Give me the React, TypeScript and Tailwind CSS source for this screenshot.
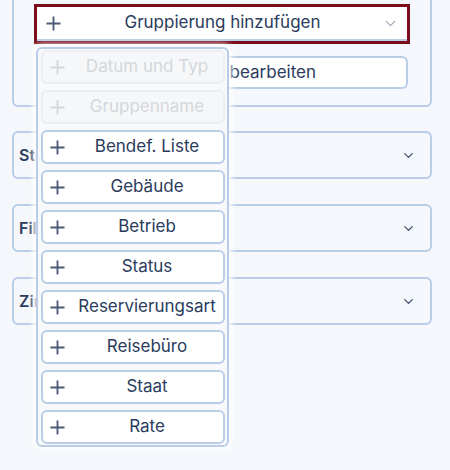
import { ChevronDown } from "lucide-react";

const items = [
  { label: "Datum und Typ", disabled: true },
  { label: "Gruppenname", disabled: true },
  { label: "Bendef. Liste" },
  { label: "Gebäude" },
  { label: "Betrieb" },
  { label: "Status" },
  { label: "Reservierungsart" },
  { label: "Reisebüro" },
  { label: "Staat" },
  { label: "Rate" },
];

const sections = ["Stornierte", "Filter", "Zimmer"];

function PlusMark({ className }: { className: string }) {
  return (
    <svg viewBox="0 0 16 16" className={className} fill="none" stroke="currentColor" strokeWidth={2}>
      <path d="M8 0.5v15M0.5 8h15" />
    </svg>
  );
}

function Section({ label }: { label: string }) {
  return (
    <div className="flex h-[48px] items-center justify-between rounded-md border-2 border-[#b9cde9] pl-[5px] pr-[14px]">
      <span className="text-[16px] font-semibold text-[#2a3b5c]">{label}</span>
      <ChevronDown className="size-[15px] text-[#3d4d6b]" strokeWidth={2} />
    </div>
  );
}

export default function App() {
  return (
    <div
      className="relative h-[470px] w-[450px] overflow-hidden bg-[#f4f7fb]"
      style={{ fontFamily: "Inter, 'Noto Sans', sans-serif" }}
    >
      <div className="mx-3 w-[420px] rounded-b-md border-x-2 border-b-2 border-[#b9cde9] px-[20px] pb-[16px] pt-1">
        <div className="border-[3px] border-[#7b0d1a] bg-white">
          <div className="flex h-[34px] items-center border-b-2 border-[#b9cde9] pl-[9px] pr-[8px]">
            <PlusMark className="size-[15px] text-[#4e5b77]" />
            <span className="flex-1 pl-[2px] text-center text-[17px] text-[#2a3b5c]">
              Gruppierung hinzufügen
            </span>
            <ChevronDown className="size-[17px] text-[#96a2b6]" strokeWidth={1.5} />
          </div>
        </div>
        <div className="mx-[2px] mt-[12px] flex h-[33px] items-center justify-center rounded-md border-2 border-[#b9cde9] bg-white pr-[4px] text-[17px] text-[#2a3b5c]">
          Gruppierung bearbeiten
        </div>
      </div>

      <div className="mx-3 mt-6 flex w-[420px] flex-col gap-[25px]">
        {sections.map((s) => (
          <Section key={s} label={s} />
        ))}
      </div>

      <div className="absolute left-[36px] top-[47px] w-[193px] rounded-md border-2 border-[#b9cde9] bg-[#f8f9fb] pb-[1px] pl-[3px] pr-[2px] pt-[1px] shadow-[0_0_6px_3px_rgba(255,255,255,0.9)]">
        <div className="flex flex-col gap-[6px]">
          {items.map((it) => (
            <div
              key={it.label}
              className={
                it.disabled
                  ? "flex h-[34px] items-center rounded-md border-2 border-[#eceef1] bg-[#f6f7f8] pl-[7px] pr-1"
                  : "flex h-[34px] items-center rounded-md border-2 border-[#b9cde9] bg-white pl-[7px] pr-1"
              }
            >
              <PlusMark
                className={it.disabled ? "size-[15px] shrink-0 text-[#d3d7dd]" : "size-[15px] shrink-0 text-[#4e5b77]"}
              />
              <span
                className={
                  it.disabled
                    ? "flex-1 whitespace-nowrap pl-[10px] text-center text-[17px] text-[#d3d7dd]"
                    : "flex-1 whitespace-nowrap pl-[10px] text-center text-[17px] text-[#2a3b5c]"
                }
              >
                {it.label}
              </span>
            </div>
          ))}
        </div>
      </div>
    </div>
  );
}
